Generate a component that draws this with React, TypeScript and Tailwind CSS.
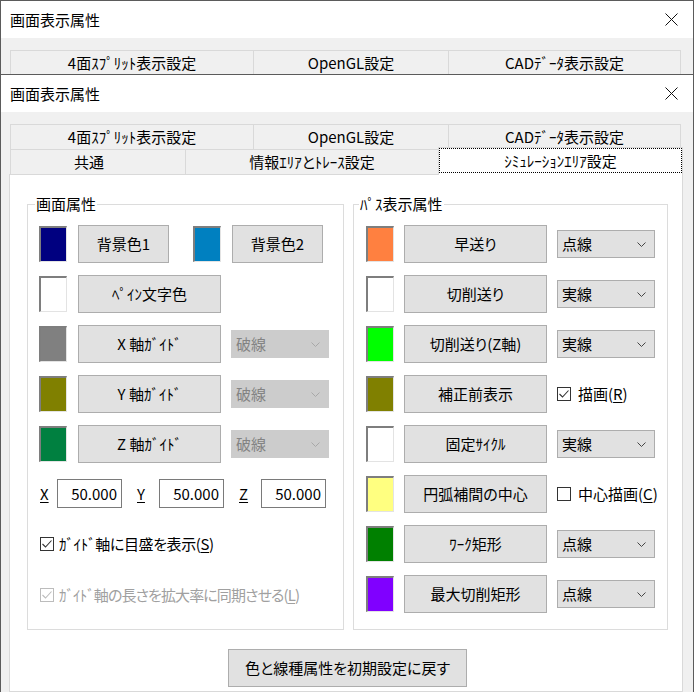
import React from 'react'

const font = "font-['Noto_Sans_CJK_JP','Noto_Sans',sans-serif] [font-feature-settings:'palt']"

function CloseIcon() {
  return (
    <svg width="13" height="13" viewBox="0 0 13 13" fill="none">
      <path d="M0.5 0.5L12.5 12.5M12.5 0.5L0.5 12.5" stroke="#111" strokeWidth="1" />
    </svg>
  )
}

function Chevron({ color }: { color: string }) {
  return (
    <svg width="9" height="5" viewBox="0 0 9 5" fill="none">
      <path d="M0.5 0.5L4.5 4.5L8.5 0.5" stroke={color} strokeWidth="1" />
    </svg>
  )
}

function TitleBar() {
  return (
    <div className="h-[37px] bg-white flex items-center justify-between pl-[9px] pr-[15px] shrink-0">
      <span className="text-[15px] leading-none text-black pb-px">画面表示属性</span>
      <CloseIcon />
    </div>
  )
}

function Swatch({ color }: { color: string }) {
  return (
    <div
      className="w-[28px] h-[36px] shrink-0 border-t-2 border-l-2 border-b border-r border-t-[#7e7e7e] border-l-[#7e7e7e] border-b-[#e3e3e3] border-r-[#e3e3e3]"
      style={{ backgroundColor: color }}
    />
  )
}

function Btn({ label, w }: { label: string; w: string }) {
  return (
    <div className={`${w} h-[38px] shrink-0 border border-[#adadad] bg-[#e1e1e1] flex items-center justify-center pb-px text-[15px] leading-none text-black`}>
      {label}
    </div>
  )
}

function Combo({ value, disabled }: { value: string; disabled?: boolean }) {
  return (
    <div
      className={
        disabled
          ? 'w-[98px] h-[28px] shrink-0 border border-[#cccccc] bg-[#cccccc] flex items-center justify-between pl-[4px] pr-[8px] text-[15px] leading-none text-[#838383]'
          : 'w-[98px] h-[28px] shrink-0 border border-[#adadad] bg-[#e1e1e1] flex items-center justify-between pl-[4px] pr-[8px] text-[15px] leading-none text-black'
      }
    >
      <span className="pb-px">{value}</span>
      <Chevron color={disabled ? '#a8a8a8' : '#444'} />
    </div>
  )
}

function Check({ checked, disabled }: { checked: boolean; disabled?: boolean }) {
  const c = disabled ? '#bcbcbc' : '#333333'
  return (
    <div
      className={
        disabled
          ? 'w-[14px] h-[14px] shrink-0 border border-[#bcbcbc] bg-white flex items-center justify-center'
          : 'w-[14px] h-[14px] shrink-0 border border-[#333333] bg-white flex items-center justify-center'
      }
    >
      {checked && (
        <svg width="12" height="12" viewBox="0 0 12 12" fill="none">
          <path d="M1.5 6L4.5 9L10.5 2.5" stroke={c} strokeWidth="1.1" />
        </svg>
      )}
    </div>
  )
}

function Group({ label, labelLeft, w, children }: { label: string; labelLeft: string; w: string; children: React.ReactNode }) {
  return (
    <div className={`${w} relative border border-[#dcdcdc] shrink-0`}>
      <span className={`absolute ${labelLeft} top-[-11px] bg-white px-[1px] text-[15px] leading-[20px] text-black`}>{label}</span>
      {children}
    </div>
  )
}

const rightRows: { color: string; label: string; kind: 'combo' | 'check'; value: string; checked?: boolean; key?: string }[] = [
  { color: '#ff8040', label: '早送り', kind: 'combo', value: '点線' },
  { color: '#ffffff', label: '切削送り', kind: 'combo', value: '実線' },
  { color: '#00ff00', label: '切削送り(Z軸)', kind: 'combo', value: '実線' },
  { color: '#808000', label: '補正前表示', kind: 'check', value: '描画(', checked: true, key: 'R' },
  { color: '#ffffff', label: '固定ｻｲｸﾙ', kind: 'combo', value: '実線' },
  { color: '#ffff80', label: '円弧補間の中心', kind: 'check', value: '中心描画(', checked: false, key: 'C' },
  { color: '#008000', label: 'ﾜｰｸ矩形', kind: 'combo', value: '点線' },
  { color: '#8000ff', label: '最大切削矩形', kind: 'combo', value: '点線' },
]

const axisRows = [
  { color: '#808080', label: 'X 軸ｶﾞｲﾄﾞ' },
  { color: '#808000', label: 'Y 軸ｶﾞｲﾄﾞ' },
  { color: '#008040', label: 'Z 軸ｶﾞｲﾄﾞ' },
]

function NumBox({ value }: { value: string }) {
  return (
    <div className="w-[65px] h-[29px] shrink-0 border border-[#7a7a7a] bg-white flex items-center justify-end pr-[4px] pb-px text-[15px] leading-none text-black">
      {value}
    </div>
  )
}

function Tab({ label, w, extra = '' }: { label: string; w: string; extra?: string }) {
  return (
    <div className={`${w} h-[26px] border border-[#d9d9d9] flex items-center justify-center pb-px text-[15px] leading-none ${extra}`}>
      {label}
    </div>
  )
}

export default function App() {
  return (
    <div className={`w-[694px] h-[692px] overflow-hidden bg-[#f0f0f0] flex flex-col ${font}`}>
      {/* back window */}
      <div className="h-[74px] shrink-0 overflow-hidden border-x border-t border-[#5b5b5b] flex flex-col">
        <TitleBar />
        <div className="flex-1 bg-[#f0f0f0] pt-[12px] pl-[9px]">
          <div className="flex h-[26px]">
            <Tab label="4面ｽﾌﾟﾘｯﾄ表示設定" w="w-[244px]" />
            <Tab label="OpenGL設定" w="w-[196px]" extra="-ml-px" />
            <Tab label="CADﾃﾞｰﾀ表示設定" w="w-[233px]" extra="-ml-px" />
          </div>
        </div>
      </div>

      {/* front window */}
      <div className="flex-1 border-x border-t border-[#5b5b5b] flex flex-col min-h-0">
        <TitleBar />
        <div className="flex-1 bg-[#f0f0f0] pt-[12px] pl-[8px] flex flex-col min-h-0">
          <div className="flex h-[26px] ml-[1px] shrink-0">
            <Tab label="4面ｽﾌﾟﾘｯﾄ表示設定" w="w-[244px]" />
            <Tab label="OpenGL設定" w="w-[196px]" extra="-ml-px" />
            <Tab label="CADﾃﾞｰﾀ表示設定" w="w-[233px]" extra="-ml-px" />
          </div>
          <div className="flex h-[26px] -mt-px ml-[1px] shrink-0 items-start">
            <Tab label="共通" w="w-[176px]" extra="pr-[18px]" />
            <Tab label="情報ｴﾘｱとﾄﾚｰｽ設定" w="w-[254px]" extra="-ml-px" />
            <div className="w-[245px] h-[28px] -ml-px -mt-[2px] relative z-10 border-x border-t border-[#d9d9d9] bg-white">
              <div className="h-[25px] border border-dotted border-black flex items-center justify-center pb-px text-[15px] leading-none">ｼﾐｭﾚｰｼｮﾝｴﾘｱ設定</div>
            </div>
          </div>

          {/* tab panel */}
          <div className="w-[674px] flex-1 -mt-px border border-[#d9d9d9] bg-white pt-[29px] pl-[17px] text-black">
            <div className="flex gap-[9px] items-stretch">
              <Group label="画面属性" labelLeft="left-[7px]" w="w-[317px]">
                <div className="pl-[11px] pt-[20px] flex flex-col">
                  <div className="flex flex-col gap-[12px]">
                    <div className="flex items-center h-[38px]">
                      <Swatch color="#000080" />
                      <div className="ml-[11px]"><Btn label="背景色1" w="w-[91px]" /></div>
                      <div className="ml-[24px]"><Swatch color="#0080c0" /></div>
                      <div className="ml-[11px]"><Btn label="背景色2" w="w-[91px]" /></div>
                    </div>
                    <div className="flex items-center h-[38px]">
                      <Swatch color="#ffffff" />
                      <div className="ml-[11px]"><Btn label="ﾍﾟｲﾝ文字色" w="w-[143px]" /></div>
                    </div>
                    {axisRows.map((r) => (
                      <div key={r.label} className="flex items-center h-[38px]">
                        <Swatch color={r.color} />
                        <div className="ml-[11px]"><Btn label={r.label} w="w-[143px]" /></div>
                        <div className="ml-[10px]"><Combo value="破線" disabled /></div>
                      </div>
                    ))}
                  </div>

                  <div className="flex items-center mt-[16px] text-[15px] leading-none">
                    <span className="w-[18px] pl-[1px]"><span className="underline underline-offset-2">X</span></span>
                    <NumBox value="50.000" />
                    <span className="w-[22px] ml-[15px]"><span className="underline underline-offset-2">Y</span></span>
                    <NumBox value="50.000" />
                    <span className="w-[22px] ml-[15px]"><span className="underline underline-offset-2">Z</span></span>
                    <NumBox value="50.000" />
                  </div>

                  <div className="flex items-center h-[28px] mt-[22px] ml-[1px] text-[15px] leading-none">
                    <Check checked />
                    <span className="ml-[5px] pb-px tracking-[-0.4px]">ｶﾞｲﾄﾞ軸に目盛を表示(<span className="underline underline-offset-2">S</span>)</span>
                  </div>
                  <div className="flex items-center h-[28px] mt-[23px] ml-[1px] text-[15px] leading-none text-[#a0a0a0]">
                    <Check checked disabled />
                    <span className="ml-[5px] pb-px tracking-[-0.9px]">ｶﾞｲﾄﾞ軸の長さを拡大率に同期させる(<span className="underline underline-offset-2">L</span>)</span>
                  </div>
                </div>
              </Group>

              <Group label="ﾊﾟｽ表示属性" labelLeft="left-[5px]" w="w-[315px]">
                <div className="pl-[12px] pt-[20px] pb-[16px] flex flex-col gap-[12px]">
                  {rightRows.map((r) => (
                    <div key={r.label} className="flex items-center h-[38px]">
                      <Swatch color={r.color} />
                      <div className="ml-[10px]"><Btn label={r.label} w="w-[143px]" /></div>
                      {r.kind === 'combo' ? (
                        <div className="ml-[10px]"><Combo value={r.value} /></div>
                      ) : (
                        <div className="ml-[10px] flex items-center text-[15px] leading-none">
                          <Check checked={!!r.checked} />
                          <span className="ml-[7px] pb-px">
                            {r.value}
                            <span className="underline underline-offset-2">{r.key}</span>)
                          </span>
                        </div>
                      )}
                    </div>
                  ))}
                </div>
              </Group>
            </div>

            <div className="mt-[19px] ml-[201px]">
              <Btn label="色と線種属性を初期設定に戻す" w="w-[239px]" />
            </div>
          </div>
        </div>
      </div>
    </div>
  )
}
